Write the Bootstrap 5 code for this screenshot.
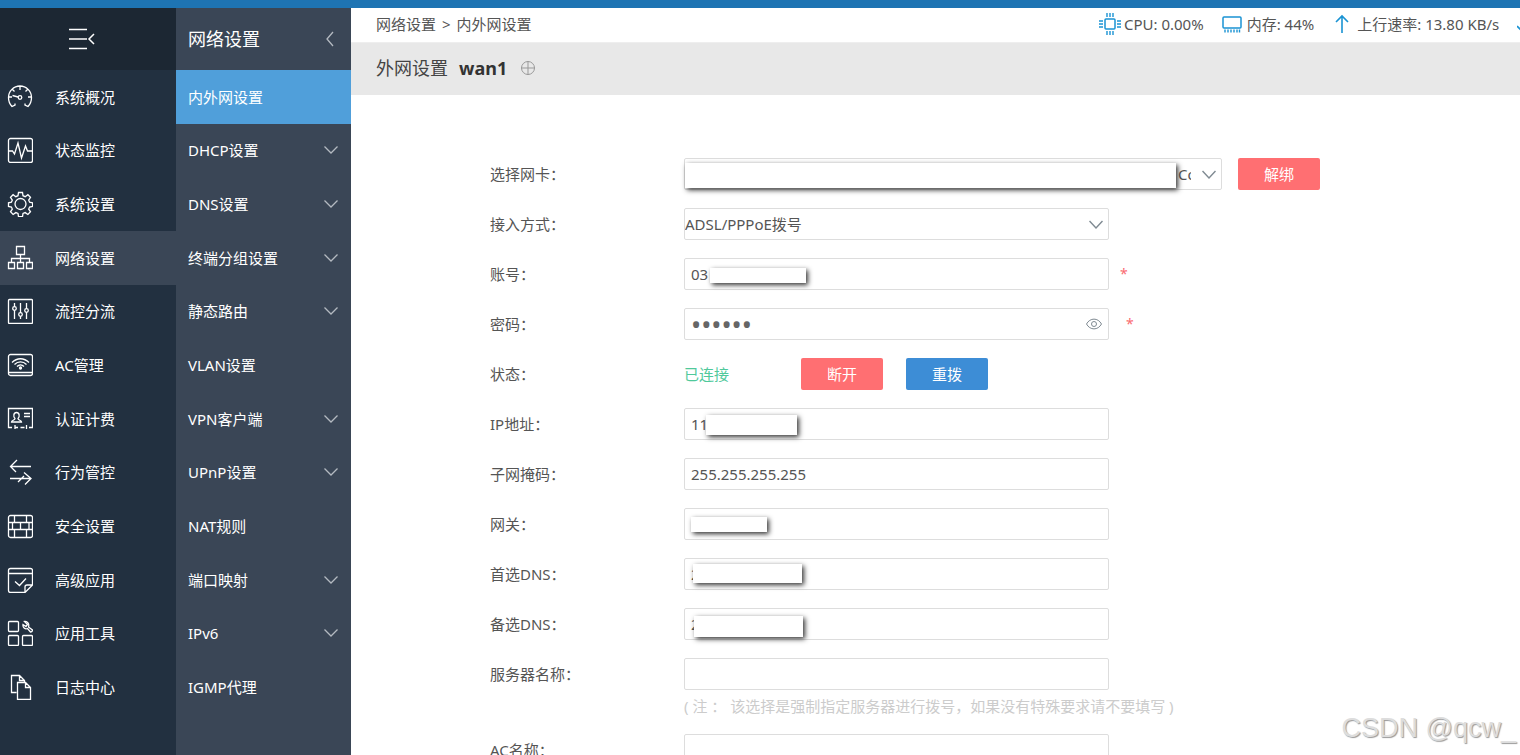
<!DOCTYPE html>
<html lang="zh-CN">
<head>
<meta charset="utf-8">
<meta name="viewport" content="width=device-width, initial-scale=1">
<title>内外网设置</title>
<link href="https://cdn.jsdelivr.net/npm/bootstrap@5.3.0/dist/css/bootstrap.min.css" rel="stylesheet">
<style>
body{font:15px/20px "Noto Sans","Noto Sans CJK SC",sans-serif;color:#555;background:#fff}
a{color:inherit;text-decoration:none}
.topline{height:8px;background:#1e74b3}
.mainmenu{width:176px;background:#223040;color:#fff}
.submenu{width:175px;background:#3a4656;color:#fff}
.menuhead{height:62px}
.mainmenu .menuhead{background:#1c2733}
.mainmenu .menuhead button{margin-right:13px}
.submenu .menuhead{font-size:18px}
.menulist{display:grid;grid-template-rows:repeat(12,1fr);height:644px}
.menulist a{display:flex;align-items:center;height:100%}
.mainmenu .menulist a{padding-left:7px;gap:22px}
.mainmenu .menulist a.active{background:#3a4656}
.submenu .menulist a,.submenu .menuhead{padding:0 13px 0 12px;justify-content:space-between}
.submenu .menuhead{padding-right:15px}
.submenu .menulist a.active{background:#509fda}
svg{fill:none;stroke:currentColor;flex:none}
.menulist svg{stroke-width:1.3}
.submenu svg{color:#b4bac1}
.crumbs{height:35px;border-bottom:1px solid #eee;padding:0 0 2px 25px}
.crumbs ol{--bs-breadcrumb-divider:">";--bs-breadcrumb-item-padding-x:6px;--bs-breadcrumb-font-size:15px;--bs-breadcrumb-divider-color:#555}
.status{width:421px;gap:18px}
.status > span{display:flex;align-items:center;gap:5px}
.status > span:first-child{gap:3px}
.status svg{color:#1a93d3}
.titlebar{height:52px;background:#e8e8e8;padding:0 25px 2px;color:#444}
.titlebar h1,.titlebar strong{font-size:18px;line-height:24px}
.titlebar strong{color:#333;margin:0 14px 0 11px}
.ruleform{padding:63px 0 0 139px}
.field{display:grid;grid-template-columns:194px 1fr;margin-bottom:18px}
.field > label,.field > .cap{line-height:32px}
.box{width:425px;position:relative}
.box.wide{width:538px}
.box .form-control,.box .form-select{height:32px;font-size:15px;line-height:20px;color:#555;border:1px solid #ddd;border-radius:2px;padding:0 6px;background:#fff}
.box .form-control[type=password]{font-size:27px;color:#666}
.box .form-select{padding:0 30px 0 0}
.box.wide .form-select{padding-left:493px}
.box .mark-icon{position:absolute;right:6px;top:8px;color:#7f8a92;border:0;background:none;padding:0;display:flex}
.box .mark-icon.arrow{top:12px;stroke-width:1.4}
.star{color:#fa6b70;margin-left:11px;font-size:14px}
.star.far{margin-left:17px}
.cover{position:absolute;background:#fff;box-shadow:2px 2px 5px #333;left:var(--l);top:var(--t);width:var(--w);height:var(--h)}
.act{width:82px;height:32px;padding:0;font-size:15px;border:0;border-radius:2px;color:#fff}
.act.warn{background:#ff6f72}
.act.go{background:#3d8dd6;margin-left:23px}
.state{color:#50c99b;width:117px}
.note{color:#ccc;margin-top:6px}
.stamp{position:absolute;right:4px;bottom:9px;font:27px/36px "Liberation Sans",sans-serif;color:#ddd;text-shadow:1px 1px 1px #999}
</style>
</head>
<body class="vh-100 overflow-hidden d-flex flex-column position-relative">
<div class="topline flex-shrink-0"></div>
<div class="d-flex flex-grow-1 overflow-hidden">
  <nav class="mainmenu flex-shrink-0">
    <div class="menuhead d-flex align-items-center justify-content-center">
      <button class="btn p-0 border-0 text-white d-flex" aria-label="收起菜单"><svg width="26" height="22"><path d="M0 1.500h18M0 11h18M0 20.500h18" stroke-width="1.500"/><path d="M25 6l-5 5 5 5" stroke-width="1.500"/></svg></button>
    </div>
    <ul class="menulist list-unstyled mb-0">
      <li><a href="#"><svg width="26" height="26"><path d="M8 19.500v1.500l-3 1.500C2.500 20 1.500 17 1.500 13.500a11.500 11.500 0 0 1 23 0c0 3.500-1 6.500-3.500 9L18 21v-1.500M13 2v4M5 5l2.500 2.500M21 5l-2.500 2.500M2 13h3M21 13h3.500M5.500 11.500l5.500 1.500"/><circle cx="13" cy="13.500" r="1.800"/></svg>系统概况</a></li>
      <li><a href="#"><svg width="26" height="26"><rect x="1.500" y="1.500" width="24" height="24" rx="2"/><path d="M2 14h3.500l2 3L11 6l3.500 15L18.500 9l2 5H25"/></svg>状态监控</a></li>
      <li><a href="#"><svg width="26" height="26"><circle cx="13.500" cy="13" r="5.500"/><path d="M11.500 1.500h4l.5 3.200 2.200 1 2.700-2 2.600 2.700-1.800 2.700.9 2.100 3 .6v3.600l-3 .6-.9 2.100 1.800 2.700-2.600 2.700-2.700-1.900-2.200.9-.5 3.200h-4l-.5-3.200-2.200-.9-2.700 1.900-2.600-2.700 1.800-2.700-.9-2.100-2.900-.6v-3.600l2.900-.6.9-2.100-1.800-2.700 2.600-2.700 2.700 2 2.200-1z"/></svg>系统设置</a></li>
      <li><a href="#" class="active"><svg width="26" height="26"><path d="M9.500 1.500h8v8h-8zM1.500 17.500h6v6h-6zM10.500 17.500h6v6h-6zM19.500 17.500h6v6h-6zM13.500 9.500v8M4.500 17.500v-4h18v4"/></svg>网络设置</a></li>
      <li><a href="#"><svg width="26" height="26"><rect x="1.500" y="1.500" width="24" height="24" rx="1"/><path d="M7.500 5v3.500M7.500 12.500V21M13.500 5v10M13.500 18.500V21M19.500 5v5.500M19.500 14V21"/><circle cx="7.500" cy="10.500" r="1.800"/><circle cx="13.500" cy="16.500" r="1.800"/><circle cx="19.500" cy="12.500" r="1.800"/></svg>流控分流</a></li>
      <li><a href="#"><svg width="26" height="26"><rect x="1.500" y="2.500" width="24" height="21" rx="2"/><path d="M1.500 20.500h24M5 10.500c5-5 12-5 17 0M7.500 12.500c3.500-3.500 8.500-3.500 12 0M10 14.500c2-2 5-2 7 0"/><circle cx="13.500" cy="16" r="1" fill="currentColor"/></svg>AC管理</a></li>
      <li><a href="#"><svg width="26" height="26"><path d="M5 21.500H1.500v-19h24v19H22M8 19v4M8 21.500h3M13.500 21.500h4M19.500 19v4M17 7.500h6M17 10.500h6"/><path d="M4.500 16c0-2 3.500-1.500 3.500-3.500-2-2-1.500-6 1.500-6s3.500 4 1.500 6c0 2 3.500 1.500 3.500 3.500z"/></svg>认证计费</a></li>
      <li><a href="#"><svg width="26" height="26"><path d="M24 7.500H4M10 1L3.500 7.500 9 13M3 19.500h20M17 13.500l7 6-6 6M11 23l6-6"/></svg>行为管控</a></li>
      <li><a href="#"><svg width="26" height="26"><rect x="1.500" y="2.500" width="24" height="22" rx="2"/><path d="M1.500 9.500h24M1.500 16.500h24M7.500 2.500v7M19.500 2.500v7M13.500 9.500v7M7.500 16.500v8M19.500 16.500v8M5.500 9.500v7M22 9.500v7"/></svg>安全设置</a></li>
      <li><a href="#"><svg width="26" height="26"><path d="M18 25.500H3.500q-2 0-2-2v-20q0-2 2-2h20q2 0 2 2V18zM18 25.500V20q0-2 2-2h5.500M1.500 6.500h24M8 14.500l4.500 4 6.500-7"/></svg>高级应用</a></li>
      <li><a href="#"><svg width="26" height="26"><rect x="1.500" y="1.500" width="10" height="10" rx="1"/><rect x="1.500" y="15.500" width="10" height="10" rx="1"/><rect x="15.500" y="15.500" width="10" height="10" rx="1"/><path d="M17.500 1.500l3 3-1.500 2-3-2c-.5 3 2 5 4.500 4l3 3.500q2 0 2-2l-4-3c1-3-1-6-4-5.500z"/></svg>应用工具</a></li>
      <li><a href="#"><svg width="26" height="26"><path d="M9.500 18.500h-5v-17h8l5 5v2M12.500 1.500v5h5M10.500 8.500h8l5 5v12h-13zM18.500 8.500v5h5"/></svg>日志中心</a></li>
    </ul>
  </nav>
  <nav class="submenu flex-shrink-0">
    <div class="menuhead d-flex align-items-center"><span>网络设置</span><svg width="14" height="16"><path d="M11 1L5 8l6 7" stroke-width="1.300"/></svg></div>
    <ul class="menulist list-unstyled mb-0">
      <li><a href="#" class="active">内外网设置</a></li>
      <li><a href="#">DHCP设置<svg width="14" height="8"><path d="M.5.5L7 7 13.500.5"/></svg></a></li>
      <li><a href="#">DNS设置<svg width="14" height="8"><path d="M.5.5L7 7 13.500.5"/></svg></a></li>
      <li><a href="#">终端分组设置<svg width="14" height="8"><path d="M.5.5L7 7 13.500.5"/></svg></a></li>
      <li><a href="#">静态路由<svg width="14" height="8"><path d="M.5.5L7 7 13.500.5"/></svg></a></li>
      <li><a href="#">VLAN设置</a></li>
      <li><a href="#">VPN客户端<svg width="14" height="8"><path d="M.5.5L7 7 13.500.5"/></svg></a></li>
      <li><a href="#">UPnP设置<svg width="14" height="8"><path d="M.5.5L7 7 13.500.5"/></svg></a></li>
      <li><a href="#">NAT规则</a></li>
      <li><a href="#">端口映射<svg width="14" height="8"><path d="M.5.5L7 7 13.500.5"/></svg></a></li>
      <li><a href="#">IPv6<svg width="14" height="8"><path d="M.5.5L7 7 13.500.5"/></svg></a></li>
      <li><a href="#">IGMP代理</a></li>
    </ul>
  </nav>
  <main class="flex-grow-1 overflow-hidden">
    <div class="crumbs d-flex align-items-center justify-content-between">
      <ol class="breadcrumb mb-0"><li class="breadcrumb-item"><a href="#">网络设置</a></li><li class="breadcrumb-item">内外网设置</li></ol>
      <div class="status d-flex align-items-center text-nowrap overflow-hidden">
        <span><svg width="22" height="22"><rect x="6" y="6" width="10" height="10" rx="1" stroke-width="1.500"/><path d="M8 0v4M11 0v4M14 0v4M8 18v4M11 18v4M14 18v4M0 8h4M0 11h4M0 14h4M18 8h4M18 11h4M18 14h4" stroke-width="1.400"/></svg>CPU: 0.00%</span>
        <span><svg width="20" height="18"><rect x="1" y="2" width="18" height="11" rx="1" stroke-width="1.500"/><path d="M3 14.500v3M6 14.500v3M9 14.500v3M12 14.500v3M15 14.500v3M17.500 14.500v3" stroke-width="1.400"/></svg>内存: 44%</span>
        <span><svg width="20" height="20"><path d="M10 19V2M4 8l6-6 6 6" stroke-width="1.600"/></svg>上行速率: 13.80 KB/s</span>
        <span><svg width="12" height="20" role="img" aria-label="下行速率"><path d="M6 1v17M0 12l6 6 6-6" stroke-width="1.600"/></svg></span>
      </div>
    </div>
    <div class="titlebar d-flex align-items-center">
      <h1 class="mb-0 fw-normal">外网设置</h1><strong>wan1</strong>
      <button class="btn p-0 border-0 d-flex" aria-label="添加"><svg width="14" height="14" color="#999"><circle cx="7" cy="7" r="6.500"/><path d="M7 0v14M0 7h14"/></svg></button>
    </div>
    <form class="ruleform">
      <div class="field"><label for="nic">选择网卡：</label><div class="d-flex align-items-center">
        <div class="box wide"><select id="nic" class="form-select"><option>Connection</option></select><svg class="mark-icon arrow pe-none" width="14" height="9"><path d="M.5 1L7 8l6.500-7"/></svg><span class="cover" style="--l:1px;--t:5px;--w:491px;--h:25px"></span></div>
        <button type="button" class="btn act warn ms-3">解绑</button></div></div>
      <div class="field"><label for="mode">接入方式：</label><div class="box"><select id="mode" class="form-select"><option>ADSL/PPPoE拨号</option></select><svg class="mark-icon arrow pe-none" width="14" height="9"><path d="M.5 1L7 8l6.500-7"/></svg></div></div>
      <div class="field"><label for="acct">账号：</label><div class="d-flex align-items-center"><div class="box"><input id="acct" class="form-control" value="03"><span class="cover" style="--l:26px;--t:10px;--w:96px;--h:15px"></span></div><span class="star">*</span></div></div>
      <div class="field"><label for="pwd">密码：</label><div class="d-flex align-items-center"><div class="box"><input id="pwd" type="password" class="form-control" value="123456"><button type="button" class="mark-icon" aria-label="显示密码"><svg width="18" height="16"><path d="M1.500 8c3.500-6.500 11.500-6.500 15 0-3.500 6.500-11.500 6.500-15 0z"/><circle cx="9" cy="8" r="2.500"/></svg></button></div><span class="star far">*</span></div></div>
      <div class="field"><span class="cap">状态：</span><div class="d-flex align-items-center"><span class="state">已连接</span><button type="button" class="btn act warn">断开</button><button type="button" class="btn act go">重拨</button></div></div>
      <div class="field"><label for="ip">IP地址：</label><div class="box"><input id="ip" class="form-control" value="11"><span class="cover" style="--l:22px;--t:7px;--w:91px;--h:20px"></span></div></div>
      <div class="field"><label for="mask">子网掩码：</label><div class="box"><input id="mask" class="form-control" value="255.255.255.255"></div></div>
      <div class="field"><label for="gw">网关：</label><div class="box"><input id="gw" class="form-control"><span class="cover" style="--l:7px;--t:9px;--w:76px;--h:15px"></span></div></div>
      <div class="field"><label for="dns1">首选DNS：</label><div class="box"><input id="dns1" class="form-control" value="2"><span class="cover" style="--l:9px;--t:6px;--w:109px;--h:19px"></span></div></div>
      <div class="field"><label for="dns2">备选DNS：</label><div class="box"><input id="dns2" class="form-control" value="2"><span class="cover" style="--l:10px;--t:8px;--w:109px;--h:21px"></span></div></div>
      <div class="field"><label for="srv">服务器名称：</label><div><div class="box"><input id="srv" class="form-control"></div><div class="note">( 注 ： 该选择是强制指定服务器进行拨号，如果没有特殊要求请不要填写 )</div></div></div>
      <div class="field"><label for="ac">AC名称：</label><div class="box"><input id="ac" class="form-control"></div></div>
    </form>
  </main>
</div>
<div class="stamp">CSDN @qcw_</div>
<script src="https://cdn.jsdelivr.net/npm/bootstrap@5.3.0/dist/js/bootstrap.bundle.min.js"></script>
</body>
</html>
